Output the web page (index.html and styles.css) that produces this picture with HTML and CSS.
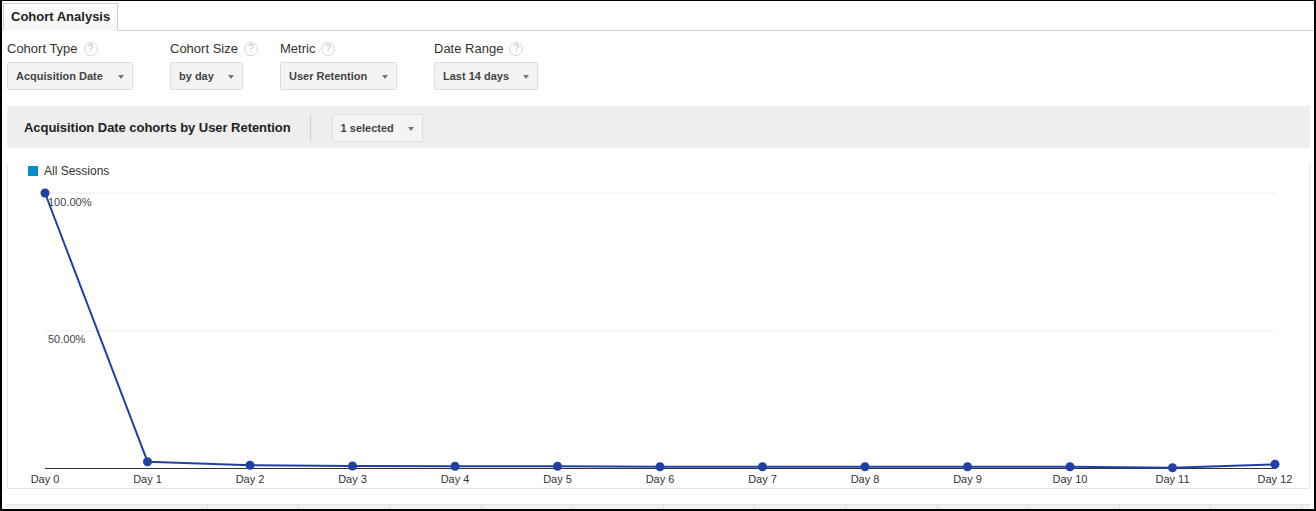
FILE: index.html
```html
<!DOCTYPE html>
<html>
<head>
<meta charset="utf-8">
<title>Cohort Analysis</title>
<link rel="stylesheet" href="styles.css">
</head>
<body>
<div class="frame">
  <div class="tabbar">
    <div class="tab">Cohort Analysis</div>
  </div>
  <div class="content">
    <div class="controls">
      <div class="group">
        <div class="label">Cohort Type <span class="help">?</span></div>
        <div class="dropdown dd-type">Acquisition Date <span class="caret"></span></div>
      </div>
      <div class="group">
        <div class="label">Cohort Size <span class="help">?</span></div>
        <div class="dropdown dd-size">by day <span class="caret"></span></div>
      </div>
      <div class="group">
        <div class="label">Metric <span class="help">?</span></div>
        <div class="dropdown dd-metric">User Retention <span class="caret"></span></div>
      </div>
      <div class="group">
        <div class="label">Date Range <span class="help">?</span></div>
        <div class="dropdown dd-range">Last 14 days <span class="caret"></span></div>
      </div>
    </div>

    <div class="titlebar">
      <div class="title">Acquisition Date cohorts by User Retention</div>
      <div class="sep"></div>
      <div class="dropdown small">1 selected <span class="caret"></span></div>
    </div>

    <div class="chart">
      <div class="legend"><span class="swatch"></span>All Sessions</div>
      <svg class="plot" width="1301" height="308" viewBox="0 0 1301 308">
        <line x1="37" y1="13" x2="1268" y2="13" stroke="#ececec" stroke-width="1"/>
        <line x1="37" y1="151" x2="1268" y2="151" stroke="#ececec" stroke-width="1"/>
        <line x1="37" y1="288.5" x2="1268" y2="288.5" stroke="#333" stroke-width="1"/>
        <text x="40" y="26" class="ylab">100.00%</text>
        <text x="40" y="163" class="ylab">50.00%</text>
        <polyline fill="none" stroke="#2140a6" stroke-width="2" stroke-linejoin="round"
          points="37,13 139.5,281.7 242,285.3 344.5,286 447,286.2 549.5,286.3 652,286.8 754.5,286.8 857,286.7 959.5,286.7 1062,286.7 1164.5,287.7 1267,284.3"/>
        <g fill="#2140a6">
          <circle cx="37" cy="13" r="4.5"/>
          <circle cx="139.5" cy="281.7" r="4.5"/>
          <circle cx="242" cy="285.3" r="4.5"/>
          <circle cx="344.5" cy="286" r="4.5"/>
          <circle cx="447" cy="286.2" r="4.5"/>
          <circle cx="549.5" cy="286.3" r="4.5"/>
          <circle cx="652" cy="286.8" r="4.5"/>
          <circle cx="754.5" cy="286.8" r="4.5"/>
          <circle cx="857" cy="286.7" r="4.5"/>
          <circle cx="959.5" cy="286.7" r="4.5"/>
          <circle cx="1062" cy="286.7" r="4.5"/>
          <circle cx="1164.5" cy="287.7" r="4.5"/>
          <circle cx="1267" cy="284.3" r="4.5"/>
        </g>
        <g class="xlab" text-anchor="middle">
          <text x="37" y="303">Day 0</text>
          <text x="139.5" y="303">Day 1</text>
          <text x="242" y="303">Day 2</text>
          <text x="344.5" y="303">Day 3</text>
          <text x="447" y="303">Day 4</text>
          <text x="549.5" y="303">Day 5</text>
          <text x="652" y="303">Day 6</text>
          <text x="754.5" y="303">Day 7</text>
          <text x="857" y="303">Day 8</text>
          <text x="959.5" y="303">Day 9</text>
          <text x="1062" y="303">Day 10</text>
          <text x="1164.5" y="303">Day 11</text>
          <text x="1267" y="303">Day 12</text>
        </g>
      </svg>
    </div>

    <div class="tablehead">
      <div class="th first"></div>
      <div class="th"></div><div class="th"></div><div class="th"></div>
      <div class="th"></div><div class="th"></div><div class="th"></div>
      <div class="th"></div><div class="th"></div><div class="th"></div>
      <div class="th"></div><div class="th"></div><div class="th"></div>
      <div class="th"></div>
    </div>
  </div>
</div>
</body>
</html>
```

FILE: styles.css
```css
* { box-sizing: border-box; }
html, body { margin: 0; padding: 0; background: #fff; }
body {
  font-family: "Liberation Sans", Arial, sans-serif;
  color: #333;
}
.frame {
  width: 1316px;
  height: 511px;
  border-style: solid;
  border-color: #000;
  border-width: 1px 2px 2px 2px;
  overflow: hidden;
}
.tabbar {
  display: flex;
  padding: 2px 0 0 1px;
  border-bottom: 1px solid #cfcfcf;
}
.tab {
  height: 28px;
  line-height: 26px;
  margin-bottom: -1px;
  padding: 0 7px 0 7px;
  border: 1px solid #cfcfcf;
  border-bottom: 1px solid #fafafa;
  background: linear-gradient(#ffffff, #f6f6f6);
  font-weight: bold;
  font-size: 13px;
  color: #222;
}
.content {
  padding: 0 4px 0 5px;
}
.controls {
  display: flex;
  gap: 37px;
  padding-top: 10px;
}
.group {
  display: flex;
  flex-direction: column;
  gap: 5px;
}
.label {
  width: 0;
  white-space: nowrap;
  font-size: 13px;
  line-height: 16px;
  height: 16px;
  color: #333;
  display: flex;
  align-items: center;
}
.help {
  display: inline-flex;
  align-items: center;
  justify-content: center;
  width: 14px;
  height: 14px;
  margin-left: 6px;
  border: 1px solid #d4d4d4;
  border-radius: 50%;
  font-size: 10px;
  color: #bbb;
  flex: none;
}
.dropdown {
  display: flex;
  align-items: center;
  justify-content: space-between;
  height: 28px;
  padding: 0 8px 1px 8px;
  background: #f4f4f4;
  border: 1px solid #dcdcdc;
  border-radius: 2px;
  font-size: 11px;
  font-weight: bold;
  color: #444;
  white-space: nowrap;
}
.dd-type { width: 126px; }
.dd-size { width: 73px; }
.dd-metric { width: 117px; }
.dd-range { width: 104px; }
.caret {
  width: 0;
  height: 0;
  margin-left: 14px;
  border-left: 3.5px solid transparent;
  border-right: 3.5px solid transparent;
  border-top: 4px solid #777;
  margin-top: 3px;
}
.titlebar {
  margin-top: 16px;
  height: 42px;
  background: #eeeeee;
  display: flex;
  align-items: center;
  padding-left: 17px;
}
.title {
  font-size: 13px;
  font-weight: bold;
  color: #222;
  letter-spacing: -0.05px;
}
.sep {
  width: 1px;
  height: 27px;
  background: #d0d0d0;
  margin: 0 21px 0 19px;
}
.dropdown.small {
  width: 91px;
  margin-top: 2px;
  padding: 0 8px 1px 8px;
  font-weight: bold;
  color: #444;
}
.chart {
  border: 1px solid #e6e6e6;
  border-top: none;
}
.legend {
  display: flex;
  align-items: center;
  margin-top: 17px;
  padding-left: 20px;
  font-size: 12px;
  color: #333;
  height: 12px;
  line-height: 12px;
}
.swatch {
  width: 10px;
  height: 10px;
  background: #058dc7;
  margin-right: 6px;
}
.plot {
  display: block;
  margin-top: 3px;
}
.ylab {
  font-family: "Liberation Sans", Arial, sans-serif;
  font-size: 11px;
  fill: #444;
}
.xlab {
  font-family: "Liberation Sans", Arial, sans-serif;
  font-size: 11px;
  fill: #333;
}
.tablehead {
  margin-top: 15px;
  display: grid;
  grid-template-columns: 201px repeat(12, 91.2px) 1fr;
  height: 20px;
  background: #f2f2f2;
  border-top: 1px solid #e3e3e3;
}
.th {
  border-right: 1px solid #dedede;
}
.th:last-child { border-right: none; }
```
